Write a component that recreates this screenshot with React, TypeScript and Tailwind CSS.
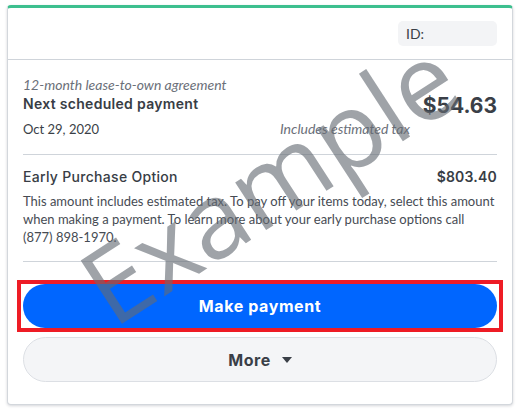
const heading = "[font-family:Inter,'Liberation_Sans',sans-serif]";
const body = "[font-family:Lato,'Open_Sans',sans-serif]";

export default function App() {
  return (
    <div className="min-h-screen bg-white pt-[5px] px-[7px]">
      <div className="relative w-[506px] overflow-hidden rounded-[4px] border border-[#d3d7dc] border-t-[3px] border-t-[#3dbf8e] bg-white shadow-[0_1px_3px_rgba(15,23,42,0.18)]">
        {/* header */}
        <div className="flex h-[52px] items-center justify-end border-b border-[#cfd4da] pr-[15px]">
          <div className={`flex h-[25px] w-[99px] items-center rounded-[5px] bg-[#f3f4f6] pl-[8px] text-[14px] text-[#3a3f47] ${body}`}>
            ID:
          </div>
        </div>

        <div className="px-[15px]">
          {/* next payment */}
          <div className="border-b border-[#cfd4da] pt-[16px] pb-[16px]">
            <p className={`text-[14px] leading-[18px] italic text-[#6b7079] ${body}`}>12-month lease-to-own agreement</p>
            <div className="flex h-[20px] items-start justify-between">
              <p className={`text-[14px] leading-[20px] font-semibold tracking-[0.3px] text-[#383d45] ${heading}`}>Next scheduled payment</p>
              <p className={`mt-[-2px] text-[21px] leading-[28px] font-bold text-[#3a3f47] ${heading}`}>$54.63</p>
            </div>
            <div className="mt-[6px] flex items-center justify-between pr-[87px]">
              <p className={`text-[13px] leading-[18px] text-[#3a3f47] ${body}`}>Oct 29, 2020</p>
              <p className={`text-[14px] leading-[18px] italic text-[#6b7079] ${body}`}>Includes estimated tax</p>
            </div>
          </div>

          {/* early purchase */}
          <div className="border-b border-[#cfd4da] pt-[12px] pb-[15px]">
            <div className="flex items-center justify-between">
              <p className={`text-[14px] leading-[20px] font-medium tracking-[0.3px] text-[#383d45] ${heading}`}>Early Purchase Option</p>
              <p className={`text-[14px] leading-[20px] font-semibold tracking-[0.2px] text-[#383d45] ${heading}`}>$803.40</p>
            </div>
            <p className={`mt-[5px] text-[13px] leading-[18px] text-[#464b53] ${body}`}>
              This amount includes estimated tax. To pay off your items today, select this amount when making a payment. To learn more about your early purchase options call (877) 898-1970.
            </p>
          </div>

          {/* actions */}
          <div className="mt-[18px] -mx-[6px] border-4 border-[#ee1c25] px-[2px]">
            <button className={`flex h-[44px] w-full items-center justify-center rounded-full bg-[#0066ff] text-[16px] font-bold tracking-[0.6px] text-white ${heading}`}>
              Make payment
            </button>
          </div>
          <button className={`mt-[5px] mb-[22px] flex h-[45px] w-full items-center justify-center gap-[11px] rounded-full border border-[#dcdfe4] bg-[#f4f5f7] text-[16px] font-bold tracking-[0.5px] text-[#3a3f47] ${heading}`}>
            More
            <svg width="10" height="6" viewBox="0 0 10 6" className="mt-[1px]">
              <path d="M0 0h10L5 6z" fill="#3a3f47" />
            </svg>
          </button>
        </div>

        {/* watermark */}
        <span className="pointer-events-none absolute left-[260px] top-[172px] -translate-x-1/2 -translate-y-1/2 rotate-[-33deg] whitespace-nowrap text-[106px] font-medium leading-none text-[rgba(100,106,115,0.62)] [font-family:'Open_Sans',sans-serif]">
          Example
        </span>
      </div>
    </div>
  );
}
